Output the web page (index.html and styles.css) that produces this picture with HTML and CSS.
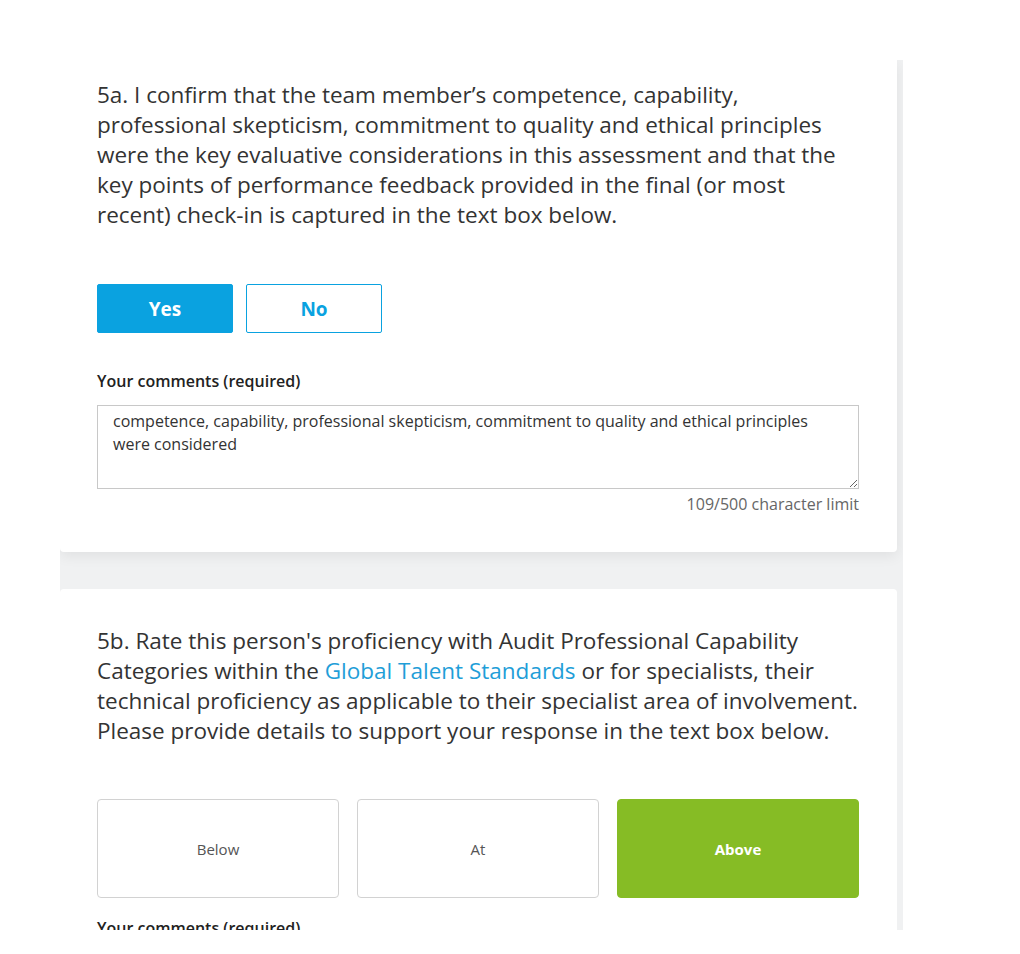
FILE: index.html
```html
<!DOCTYPE html>
<html lang="en">
<head>
<meta charset="utf-8">
<title>Assessment</title>
<link rel="stylesheet" href="styles.css">
</head>
<body>
<div class="viewport">
  <section class="card card-first">
    <p class="question">5a. I confirm that the team member’s competence, capability, professional skepticism, commitment to quality and ethical principles were the key evaluative considerations in this assessment and that the key points of performance feedback provided in the final (or most recent) check-in is captured in the text box below.</p>
    <div class="yesno">
      <button class="btn btn-yes">Yes</button>
      <button class="btn btn-no">No</button>
    </div>
    <label class="label">Your comments (required)</label>
    <textarea class="comments">competence, capability, professional skepticism, commitment to quality and ethical principles were considered</textarea>
    <div class="counter">109/500 character limit</div>
  </section>
  <section class="card card-second">
    <p class="question">5b. Rate this person's proficiency with Audit Professional Capability Categories within the <a class="link" href="#">Global Talent Standards</a> or for specialists, their technical proficiency as applicable to their specialist area of involvement. Please provide details to support your response in the text box below.</p>
    <div class="rating">
      <button class="rate">Below</button>
      <button class="rate">At</button>
      <button class="rate rate-active">Above</button>
    </div>
    <label class="label label-second">Your comments (required)</label>
  </section>
</div>
</body>
</html>
```

FILE: styles.css
```css
html, body {
  margin: 0;
  padding: 0;
  background: #ffffff;
}
body {
  font-family: "Open Sans", "Noto Sans", sans-serif;
  color: #333;
}
.viewport {
  margin: 60px 0 0 60px;
  width: 843px;
  height: 870px;
  overflow: hidden;
  background: #f0f1f2;
}
.card {
  width: 837px;
  background: #fff;
  box-sizing: border-box;
  padding: 0 38px 0 37px;
}
.card-first {
  padding-top: 20px;
  padding-bottom: 37px;
  border-radius: 0 0 4px 4px;
  box-shadow: 0 4px 14px rgba(0, 0, 0, 0.07);
}
.card-second {
  margin-top: 37px;
  padding-top: 37px;
  padding-bottom: 40px;
  border-radius: 4px 4px 0 0;
}
.question {
  margin: 0;
  font-size: 22.5px;
  line-height: 30px;
  color: #333;
}
.link {
  color: #1f9ed8;
  text-decoration: none;
}
.yesno {
  display: flex;
  gap: 13px;
  margin-top: 54px;
}
.btn {
  width: 136px;
  height: 49px;
  border-radius: 2px;
  font-family: "Open Sans", sans-serif;
  font-weight: 700;
  font-size: 19px;
  cursor: pointer;
  padding: 0;
}
.btn-yes {
  background: #0aa2e0;
  border: 1px solid #0aa2e0;
  color: #fff;
}
.btn-no {
  background: #fff;
  border: 1px solid #0aa2e0;
  color: #0aa2e0;
}
.label {
  display: block;
  margin-top: 38px;
  font-size: 16px;
  line-height: 21px;
  font-weight: 600;
  color: #222;
}
.label-second {
  margin-top: 20px;
}
.comments {
  display: block;
  box-sizing: border-box;
  width: 762px;
  height: 84px;
  margin-top: 13px;
  padding: 4px 15px;
  border: 1px solid #c8c8c8;
  border-radius: 0;
  font-family: "Open Sans", sans-serif;
  font-size: 16px;
  line-height: 23px;
  color: #333;
  resize: vertical;
}
.counter {
  margin-top: 5px;
  text-align: right;
  font-size: 16px;
  line-height: 21px;
  color: #666;
}
.rating {
  display: grid;
  grid-template-columns: repeat(3, 242px);
  gap: 18px;
  margin-top: 53px;
}
.rate {
  height: 99px;
  background: #fff;
  border: 1px solid #d2d2d2;
  border-radius: 4px;
  font-family: "Open Sans", sans-serif;
  font-size: 15px;
  color: #555;
  padding: 0;
  cursor: pointer;
}
.rate-active {
  background: #86bc25;
  border-color: #86bc25;
  color: #fff;
  font-weight: 700;
}
```
